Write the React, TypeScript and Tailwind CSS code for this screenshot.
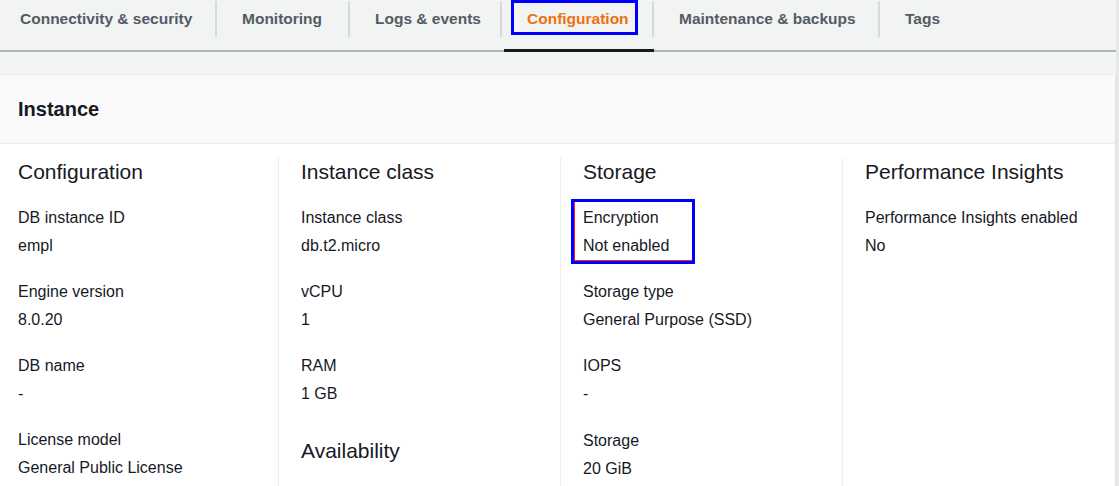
import React from "react";

const tabs = [
  { label: "Connectivity & security", w: "w-[217px]", pl: "pl-[20px]" },
  { label: "Monitoring", w: "w-[133px]", pl: "pl-[25px]" },
  { label: "Logs & events", w: "w-[152px]", pl: "pl-[25px]" },
  { label: "Configuration", w: "w-[152px]", pl: "pl-[25px]", active: true },
  { label: "Maintenance & backups", w: "w-[226px]", pl: "pl-[25px]" },
  { label: "Tags", w: "w-[100px]", pl: "pl-[25px]", last: true },
];

type KV = { k: string; v: string };

function Item({ k, v, mt = "mt-[18px]" }: KV & { mt?: string }) {
  return (
    <div className={mt}>
      <div className="leading-[28px]">{k}</div>
      <div className="leading-[28px]">{v}</div>
    </div>
  );
}

function Title({ children, className = "" }: { children: React.ReactNode; className?: string }) {
  return <div className={`text-[21px] leading-[28px] ${className}`}>{children}</div>;
}

export default function App() {
  return (
    <div
      className="w-[1119px] h-[486px] bg-[#f2f3f3] overflow-hidden flex text-[#16191f]"
      style={{ fontFamily: '"Liberation Sans", Arial, sans-serif' }}
    >
      <div className="w-[1116px] flex flex-col">
        {/* Tabs */}
        <div className="h-[52px] border-b-2 border-[#aab7b8] flex items-start relative">
          {tabs.map((t, i) => (
            <div key={i} className={`${t.w} h-[50px] relative flex flex-col`}>
              <div className={`h-[36px] flex items-center ${t.pl} ${t.last ? "" : "border-r-2 border-[#d5dbdb]"} mt-[1px]`}>
                <span
                  className={`text-[15.5px] font-bold whitespace-nowrap ${
                    t.active ? "text-[#ec7211]" : "text-[#545b64]"
                  }`}
                >
                  {t.label}
                </span>
              </div>
              {t.active && (
                <>
                  <div className="absolute left-[2px] right-0 bottom-[-2px] h-[3px] bg-[#16191f]" />
                  <div className="absolute left-[9px] top-0 w-[127px] h-[35px] border-[3px] border-[#0000ff]" />
                </>
              )}
            </div>
          ))}
        </div>

        <div className="h-[23px]" />

        {/* Card */}
        <div className="flex-1 bg-white border-r border-[#e0e3e3] shadow-[0_1px_2px_rgba(0,28,36,0.3)] flex flex-col text-[16px]">
          <div className="h-[69px] bg-[#fafafa] border-b border-[#eaeded] flex items-center pl-[18px]">
            <span className="text-[20px] font-bold">Instance</span>
          </div>
          <div className="flex-1 grid grid-cols-[278px_282px_282px_1fr] pt-[14px]">
            <div className="pl-[18px]">
              <Title>Configuration</Title>
              <Item k="DB instance ID" v="empl" />
              <Item k="Engine version" v="8.0.20" />
              <Item k="DB name" v="-" />
              <Item k="License model" v="General Public License" />
            </div>
            <div className="pl-[22px] border-l border-[#eaeded]">
              <Title>Instance class</Title>
              <Item k="Instance class" v="db.t2.micro" />
              <Item k="vCPU" v="1" />
              <Item k="RAM" v="1 GB" />
              <Title className="mt-[29px]">Availability</Title>
            </div>
            <div className="pl-[22px] border-l border-[#eaeded]">
              <Title>Storage</Title>
              <div className="mt-[13px] -ml-[12px] w-[124px] border-[3px] border-[#0000ff]">
                <div className="border-l border-b border-[#ff2020] pl-[8px] pt-[2px] pb-0">
                  <div className="leading-[28px]">Encryption</div>
                  <div className="leading-[28px]">Not enabled</div>
                </div>
              </div>
              <Item k="Storage type" v="General Purpose (SSD)" mt="mt-[14px]" />
              <Item k="IOPS" v="-" />
              <Item k="Storage" v="20 GiB" mt="mt-[19px]" />
            </div>
            <div className="pl-[22px] border-l border-[#eaeded]">
              <Title>Performance Insights</Title>
              <Item k="Performance Insights enabled" v="No" />
            </div>
          </div>
        </div>
      </div>
      <div className="w-[3px] bg-[#e6e8e8]" />
    </div>
  );
}
